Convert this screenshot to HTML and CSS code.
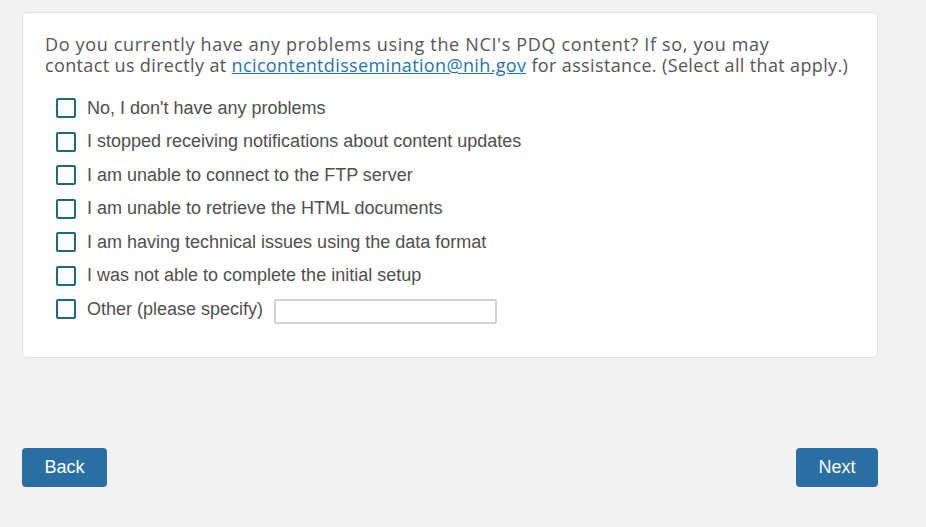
FILE: index.html
```html
<!DOCTYPE html>
<html lang="en">
<head>
<meta charset="utf-8">
<link rel="stylesheet" href="styles.css">
</head>
<body>
<div class="page">
  <div class="card">
    <p class="question"><span class="line line1">Do you currently have any problems using the NCI's PDQ content? If so, you may</span> <span class="line line2">contact us directly at <a href="#">ncicontentdissemination@nih.gov</a> for assistance. (Select all that apply.)</span></p>
    <ul class="options">
      <li class="option"><span class="box"></span><span class="label">No, I don't have any problems</span></li>
      <li class="option"><span class="box"></span><span class="label">I stopped receiving notifications about content updates</span></li>
      <li class="option"><span class="box"></span><span class="label">I am unable to connect to the FTP server</span></li>
      <li class="option"><span class="box"></span><span class="label">I am unable to retrieve the HTML documents</span></li>
      <li class="option"><span class="box"></span><span class="label">I am having technical issues using the data format</span></li>
      <li class="option"><span class="box"></span><span class="label">I was not able to complete the initial setup</span></li>
      <li class="option"><span class="box"></span><span class="label">Other (please specify)</span><span class="textbox"></span></li>
    </ul>
  </div>
  <div class="nav">
    <button class="btn">Back</button>
    <button class="btn">Next</button>
  </div>
</div>
</body>
</html>
```

FILE: styles.css
```css
html, body {
  margin: 0;
  padding: 0;
  background: #f2f2f2;
}
.page {
  width: 856px;
  margin-left: 22px;
  padding-top: 12px;
}
.card {
  background: #ffffff;
  border: 1px solid #e3e3e3;
  border-radius: 5px;
  padding: 21px 22px 24px 22px;
  box-sizing: border-box;
  height: 346px;
}
.question {
  margin: 0;
  font-family: "Open Sans", sans-serif;
  font-size: 18px;
  line-height: 21px;
  color: #555555;
  white-space: nowrap;
}
.line {
  display: block;
}
.line1 {
  letter-spacing: 0.66px;
}
.line2 {
  letter-spacing: 0.36px;
}
.question a {
  color: #1f73b7;
  text-decoration: underline;
}
.options {
  list-style: none;
  margin: 22px 0 0 11px;
  padding: 0;
  display: flex;
  flex-direction: column;
  gap: 13.5px;
}
.option {
  display: flex;
  align-items: center;
  height: 20px;
  font-family: "Liberation Sans", Arial, sans-serif;
  font-size: 18px;
  color: #4f4f4f;
}
.box {
  width: 20px;
  height: 20px;
  box-sizing: border-box;
  border: 2px solid #1b6a84;
  border-radius: 2px;
  margin-right: 11px;
  flex: none;
}
.textbox {
  width: 223px;
  height: 25px;
  box-sizing: border-box;
  border: 2px solid #d3d3d6;
  border-radius: 2px;
  margin-left: 11px;
  margin-top: 4px;
}
.nav {
  display: flex;
  justify-content: space-between;
  margin-top: 90px;
}
.btn {
  background: #2a6fa4;
  color: #ffffff;
  border: none;
  border-radius: 4px;
  height: 39px;
  width: 85px;
  font-family: "Liberation Sans", Arial, sans-serif;
  font-size: 18px;
  padding: 0;
}
.btn:last-child {
  width: 82px;
}
```
